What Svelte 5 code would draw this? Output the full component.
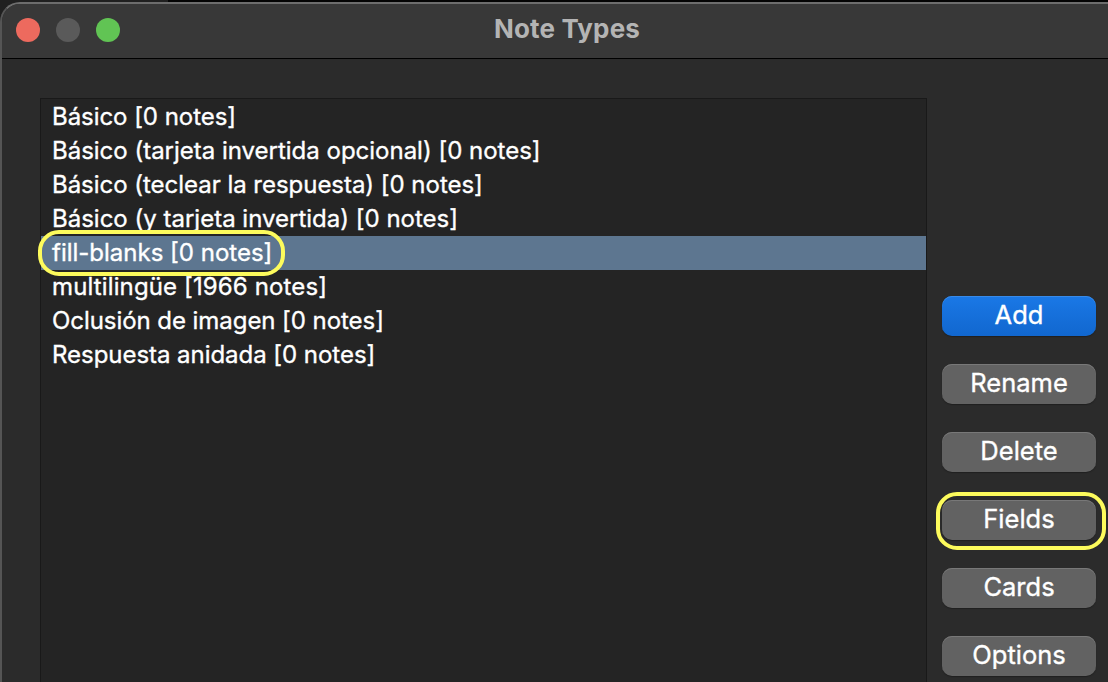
<script>
  const noteTypes = [
    { name: 'Básico', count: 0, tracking: -0.05 },
    { name: 'Básico (tarjeta invertida opcional)', count: 0, tracking: -0.01 },
    { name: 'Básico (teclear la respuesta)', count: 0, tracking: -0.03 },
    { name: 'Básico (y tarjeta invertida)', count: 0, tracking: 0 },
    { name: 'fill-blanks', count: 0, tracking: 0 },
    { name: 'multilingüe', count: 1966, tracking: 0.13 },
    { name: 'Oclusión de imagen', count: 0, tracking: -0.06 },
    { name: 'Respuesta anidada', count: 0, tracking: -0.04 }
  ];
  const actions = ['Add', 'Rename', 'Delete', 'Fields', 'Cards', 'Options'];
  let selected = $state(4);
</script>

<div class="desktop">
  <div class="window">
    <header>
      <div class="lights"><i class="close"></i><i class="minimize"></i><i class="zoom"></i></div>
      <h1>Note Types</h1>
    </header>
    <main>
      <div class="list">
        {#each noteTypes as type, i}
          <div class="row" class:selected={i === selected}>
            <span style:letter-spacing="{type.tracking}px">{type.name} [{type.count} notes]</span>
            {#if i === 4}<div class="ring ring-row"></div>{/if}
          </div>
        {/each}
      </div>
      <div class="actions">
        {#each actions as action}
          <div class="action">
            <button class:primary={action === 'Add'}>{action}</button>
            {#if action === 'Fields'}<div class="ring ring-button"></div>{/if}
          </div>
        {/each}
      </div>
    </main>
  </div>
</div>

<style>
  :global(body) { background: #050505; overflow: hidden; }
  .desktop {
    box-sizing: border-box;
    width: 1108px;
    height: 682px;
    padding-top: 2px;
    overflow: hidden;
    background: linear-gradient(90deg, #202020 168px, #040404 168px);
    font-family: Inter, "Liberation Sans", sans-serif;
  }
  .window {
    box-sizing: border-box;
    width: 1140px;
    height: 720px;
    border: 2px solid #555;
    border-top-color: #6d6d6d;
    border-radius: 20px 0 0 0;
    background: #2b2b2b;
    overflow: hidden;
  }
  header {
    box-sizing: border-box;
    height: 55px;
    padding-bottom: 2px;
    background: #383838;
    border-bottom: 1px solid #000;
    display: flex;
    align-items: center;
  }
  .lights { display: flex; gap: 16px; padding-left: 14px; }
  .lights i { width: 24px; height: 24px; border-radius: 50%; }
  .close { background: #ed6a5e; }
  .minimize { background: #5a5a5a; }
  .zoom { background: #61c454; }
  h1 {
    margin: 0 0 2px 374px;
    font-size: 26px;
    line-height: 32px;
    font-weight: 700;
    letter-spacing: 0.15px;
    color: #b4b4b4;
    white-space: nowrap;
  }
  main { display: flex; padding: 39px 0 0 38px; gap: 15px; }
  .list {
    box-sizing: border-box;
    width: 887px;
    height: 620px;
    border: 1px solid #191919;
    background: #242424;
    padding-top: 1px;
  }
  .row {
    position: relative;
    height: 34px;
    line-height: 34px;
    padding-left: 11px;
    font-size: 24px;
    color: #fff;
    white-space: nowrap;
    -webkit-text-stroke: 0.35px #fff;
  }
  .row.selected { background: #5d7690; }
  .actions { display: flex; flex-direction: column; gap: 28px; padding-top: 198px; }
  .action { position: relative; height: 40px; }
  button {
    display: block;
    width: 154px;
    height: 40px;
    padding: 0 0 3px;
    border: 0;
    border-radius: 10px;
    background: #626262;
    box-shadow: inset 0 1px 0 #787878, 0 1px 1px #202020;
    color: #fff;
    font: 25.5px/37px Inter, "Liberation Sans", sans-serif;
    -webkit-text-stroke: 0.35px #fff;
  }
  button.primary {
    background: linear-gradient(#1a78e6, #1167cf);
    box-shadow: inset 0 1px 0 #388ae8, 0 1px 1px #202020;
  }
  .ring { box-sizing: border-box; position: absolute; border: 4px solid #fdfb5c; z-index: 1; }
  .ring-row { left: -3px; top: -6px; width: 247px; height: 46px; border-radius: 21px; }
  .ring-button { left: -6px; top: -8px; width: 170px; height: 58px; border-radius: 21px; }
</style>
